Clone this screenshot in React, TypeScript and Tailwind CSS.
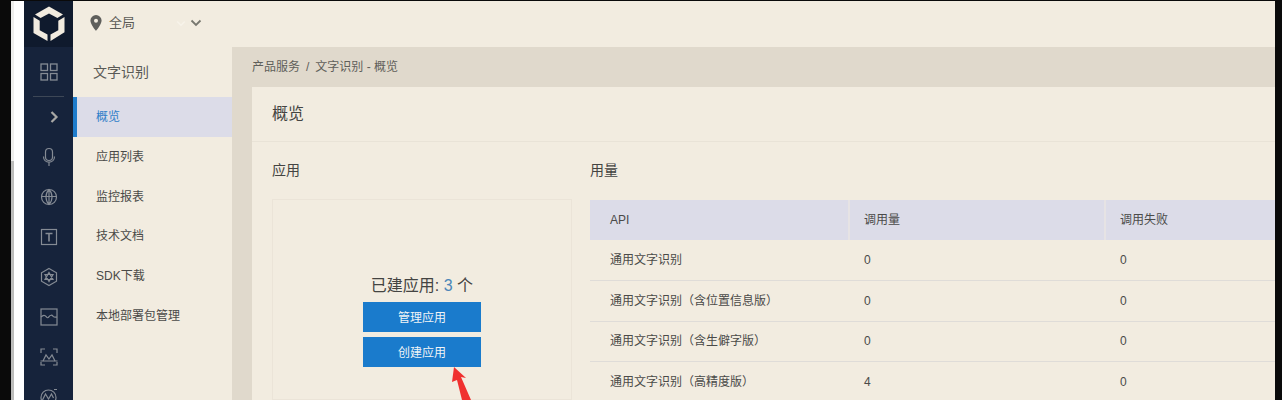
// OCR console overview page
import React from "react";

const font = { fontFamily: '"Liberation Sans", "Noto Sans CJK SC", sans-serif' };

const Icon: React.FC<{ children: React.ReactNode }> = ({ children }) => (
    <svg width="22" height="22" viewBox="0 0 22 22" fill="none" stroke="#858b94" strokeWidth="1.2">
        {children}
    </svg>
);

const railIcons = [
    // chevron
    <svg key="chevron" width="22" height="22" viewBox="0 0 22 22" fill="none" stroke="#a8a8a5" strokeWidth="2.2" className="ml-[10px]">
        <path d="M8.5 6l5 5-5 5" />
    </svg>,
    // mic
    <Icon key="mic">
        <rect x="7.5" y="2.5" width="7" height="12" rx="3.5" />
        <path d="M5.5 10.5c0 3.4 2.4 5.7 5.5 5.7s5.5-2.3 5.500-5.700M11 16.200V20" />
    </Icon>,
    // globe
    <Icon key="globe">
        <circle cx="11" cy="11" r="7.500" />
        <path d="M11 3.500c-2 2-3 4.500-3 7.500s1 5.500 3 7.500c2-2 3-4.500 3-7.500s-1-5.500-3-7.500zM11 3.500v15M3.500 10.500h15" />
    </Icon>,
    // text box
    <Icon key="text">
        <rect x="3.500" y="3.500" width="15" height="15" />
        <path d="M7.500 7.500h7M11 7.500v8" strokeWidth="1.600" />
    </Icon>,
    // hexagon
    <Icon key="hex">
        <path d="M11 2.500l7.500 4.300v8.400L11 19.500l-7.500-4.300V6.800z" />
        <path d="M11 6.500l4 7H7zM11 15.500l-4-7h8z" />
    </Icon>,
    // picture
    <Icon key="picture">
        <rect x="3" y="3" width="16" height="16" />
        <path d="M3 11c2.200-2.200 3.800-2.200 5.200-.4 1.200 1.500 1.800 1.500 2.800 0 1.200-1.800 3-1.800 4.200-.2.900 1 2 1 3.800.6" />
    </Icon>,
    // scan
    <Icon key="scan">
        <path d="M3 7V3h4M15 3h4v4M3 16v3h4M15 19h4v-3M2.500 15h17" />
        <path d="M5 15l3-6 3 4 3-4 3 6" />
    </Icon>,
    // wave
    <Icon key="wave">
        <circle cx="10.500" cy="11.500" r="7.500" />
        <path d="M4.500 14l3-6 3 5 3-5 2 4M16 3.500h3" />
    </Icon>,
];

const menuItems = ["应用列表", "监控报表", "技术文档", "SDK下载", "本地部署包管理"];

const rows = [
    { name: "通用文字识别", calls: 0, failed: 0 },
    { name: "通用文字识别（含位置信息版）", calls: 0, failed: 0 },
    { name: "通用文字识别（含生僻字版）", calls: 0, failed: 0 },
    { name: "通用文字识别（高精度版）", calls: 4, failed: 0 },
];

export default function App() {
    return (
        <div className="flex h-[400px] w-[1282px] overflow-hidden bg-[#0a0a0a] pt-px text-[12px] text-[#4a4a48]" style={font}>
            {/* browser edge */}
            <div className="ml-[11px] flex w-[3px] flex-col">
                <div className="h-[160px] bg-[#eeeeec]" />
                <div className="flex-1 bg-[#bdbdbb]" />
            </div>
            <div className="w-[10px] bg-white" />

            {/* icon rail */}
            <div className="flex w-[49px] shrink-0 flex-col bg-[#16233b]">
                <div className="flex h-[46px] shrink-0 items-center justify-center bg-[#0f1a2d]">
                    <svg width="34" height="36" viewBox="0 0 34 36" fill="#f1ebdf">
                        <path d="M17 .5l14 8-5.600 3.600L17 7.600l-8.400 4.500L3 8.500z" />
                        <path d="M1.500 11l6.200 3.800v9.400l7.800 4.400v6.400L1.500 27z" />
                        <path d="M32.500 11l-6.200 3.800v9.400l-7.800 4.400v6.400l14-8.800z" />
                    </svg>
                </div>
                <div className="flex h-[49px] shrink-0 items-center justify-center">
                    <svg width="18" height="18" viewBox="0 0 18 18" fill="none" stroke="#858b94" strokeWidth="1.300">
                        <rect x="1" y="1" width="6.500" height="6.500" />
                        <rect x="10.500" y="1" width="6.500" height="6.500" />
                        <rect x="1" y="10.500" width="6.500" height="6.500" />
                        <rect x="10.500" y="10.500" width="6.500" height="6.500" />
                    </svg>
                </div>
                <div className="mx-[9px] h-px shrink-0 bg-[#3d4756]" />
                {railIcons.map((icon, i) => (
                    <div key={i} className="flex h-[40px] shrink-0 items-center justify-center">
                        {icon}
                    </div>
                ))}
            </div>

            <div className="flex min-w-0 flex-1 flex-col bg-[#e0d9cc]">
                {/* top bar */}
                <div className="flex h-[46px] shrink-0 items-center bg-[#f2ece0] pb-[2px] pl-[16px]">
                    <svg width="14" height="18" viewBox="0 0 14 18" fill="#5f5f5c">
                        <path fillRule="evenodd" d="M7 1a5.600 5.600 0 0 0-5.600 5.600C1.400 10.500 7 17 7 17s5.600-6.500 5.600-10.400A5.600 5.600 0 0 0 7 1zm0 3.800a2 2 0 1 1 0 4 2 2 0 0 1 0-4z" />
                    </svg>
                    <span className="ml-[6px] text-[13px] text-[#5c5c58]">全局</span>
                    <svg width="10" height="7" viewBox="0 0 12 8" fill="none" stroke="#f7f3ea" strokeWidth="1.800" className="ml-[41px]">
                        <path d="M1.500 1.500L6 6l4.500-4.500" />
                    </svg>
                    <svg width="12" height="8" viewBox="0 0 12 8" fill="none" stroke="#77776f" strokeWidth="1.800" className="ml-[4px]">
                        <path d="M1.500 1.500L6 6l4.500-4.500" />
                    </svg>
                </div>

                <div className="flex min-h-0 flex-1">
                    {/* sub menu */}
                    <div className="w-[159px] shrink-0 bg-[#f2ece0]">
                        <div className="flex h-[50px] items-center pl-[20px] text-[14px] text-[#5a5a56]">文字识别</div>
                        <div className="flex h-[40px] items-center border-l-4 border-[#1f7ccb] bg-[#dcdce8] pl-[19px] text-[#2f7fc8]">概览</div>
                        {menuItems.map((item) => (
                            <div key={item} className="flex h-[39.75px] items-center pl-[23px]">{item}</div>
                        ))}
                    </div>

                    {/* main */}
                    <div className="flex min-w-0 flex-1 flex-col pl-[20px]">
                        <div className="flex h-[40px] shrink-0 items-center gap-[6px] text-[#5f5f5a]">
                            <span>产品服务</span>
                            <span>/</span>
                            <span>文字识别 - 概览</span>
                        </div>
                        <div className="flex min-h-0 flex-1 flex-col bg-[#f2ece0]">
                            <div className="flex h-[55px] shrink-0 items-center border-b border-[#e9e3d7] pl-[20px] text-[16px] text-[#444442]">概览</div>
                            <div className="flex min-h-0 flex-1 gap-[18px] pl-[20px]">
                                {/* apps */}
                                <div className="flex w-[300px] shrink-0 flex-col">
                                    <div className="flex h-[57px] shrink-0 items-center text-[14px] text-[#444442]">应用</div>
                                    <div className="relative flex-1 border border-[#ebe4d8] pt-[76px]">
                                        <div className="flex flex-col items-center">
                                            <div className="h-[26px] text-[16px] leading-[20px] text-[#444442]">
                                                已建应用: <span className="text-[#4a86b8]">3</span> 个
                                            </div>
                                            <button className="h-[30px] w-[118px] bg-[#1a7bcc] pt-[2px] text-[12px] text-[#f0f4f6]">管理应用</button>
                                            <button className="mt-[5px] h-[30px] w-[118px] bg-[#1a7bcc] pt-px text-[12px] text-[#f0f4f6]">创建应用</button>
                                        </div>
                                        <svg width="24" height="36" viewBox="0 0 24 36" fill="#f0302f" className="absolute top-[166px] left-[178px]">
                                            <path d="M3 1L1 16l5-2 5 20h9l-10-23 5 1z" />
                                        </svg>
                                    </div>
                                </div>

                                {/* usage */}
                                <div className="flex min-w-0 flex-1 flex-col">
                                    <div className="flex h-[57px] shrink-0 items-center text-[14px] text-[#444442]">用量</div>
                                    <table className="mt-px w-full table-fixed border-collapse">
                                        <thead>
                                            <tr className="h-[40px] bg-[#dcdce8] text-left">
                                                <th className="w-[259px] pl-[20px] font-normal">API</th>
                                                <th className="w-[256px] border-l-2 border-[#e6e3e4] pl-[14px] font-normal">调用量</th>
                                                <th className="border-l-2 border-[#e6e3e4] pl-[14px] font-normal">调用失败</th>
                                            </tr>
                                        </thead>
                                        <tbody>
                                            {rows.map((row) => (
                                                <tr key={row.name} className="h-[40.5px] border-b border-[#dfdcd8]">
                                                    <td className="pl-[20px]">{row.name}</td>
                                                    <td className="pl-[15px]">{row.calls}</td>
                                                    <td className="pl-[15px]">{row.failed}</td>
                                                </tr>
                                            ))}
                                        </tbody>
                                    </table>
                                </div>
                            </div>
                        </div>
                    </div>
                </div>
            </div>

            {/* browser edge */}
            <div className="w-[7px] shrink-0" />
        </div>
    );
}
